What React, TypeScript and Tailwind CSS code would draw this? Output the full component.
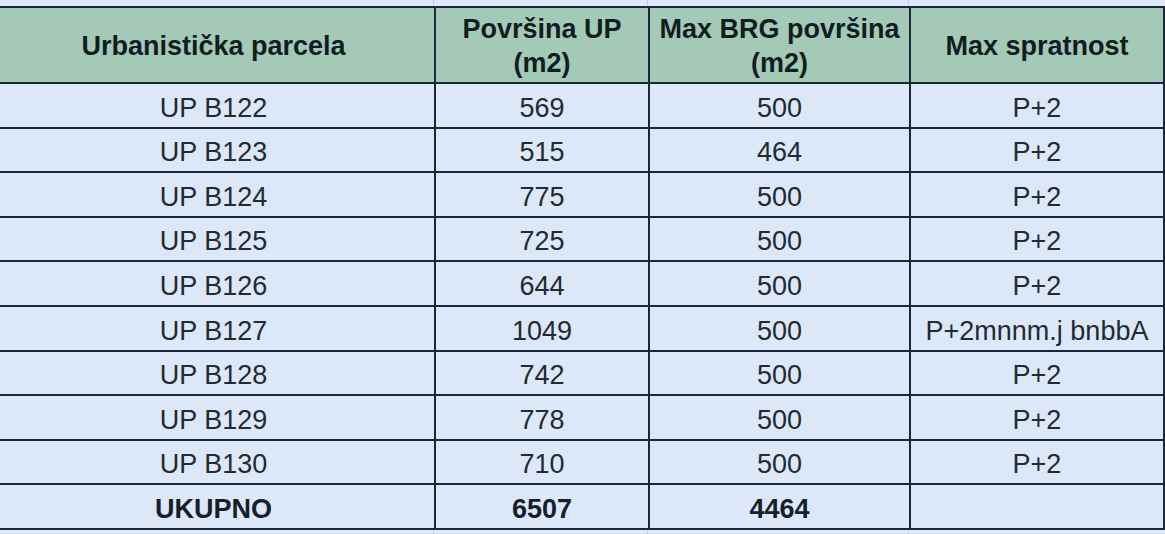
const rows: [string, string, string, string][] = [
  ['UP B122', '569', '500', 'P+2'],
  ['UP B123', '515', '464', 'P+2'],
  ['UP B124', '775', '500', 'P+2'],
  ['UP B125', '725', '500', 'P+2'],
  ['UP B126', '644', '500', 'P+2'],
  ['UP B127', '1049', '500', 'P+2mnnm.j bnbbA'],
  ['UP B128', '742', '500', 'P+2'],
  ['UP B129', '778', '500', 'P+2'],
  ['UP B130', '710', '500', 'P+2'],
];

const cols = 'grid-cols-[441px_212px_259px_252px]';

function Strip({ height }: { height: string }) {
  return (
    <div className={`flex ${height} ml-[-7px]`}>
      <div className="w-[441px] border-r border-[#c3cddb]" />
      <div className="w-[214px] border-r border-[#c3cddb]" />
      <div className="w-[261px] border-r border-[#c3cddb]" />
      <div className="flex-1" />
    </div>
  );
}

const head = 'h-[74px] bg-[#a4c9b6] flex items-center justify-center font-bold text-[27px] leading-[34px] text-[#0f1e22] text-center pt-[2px]';
const cell = 'h-[42.6px] bg-[#dce8f8] flex items-center justify-center text-[27px] pt-[5px] whitespace-nowrap overflow-hidden';

export default function App() {
  return (
    <div
      className="w-[1165px] h-[534px] overflow-hidden bg-[#dde8f7] text-[#222a33]"
      style={{ fontFamily: '"Liberation Sans", Arial, sans-serif' }}
    >
      <Strip height="h-[6px]" />
      <div className={`grid ${cols} gap-[2px] p-[2px] bg-[#18283a] ml-[-9px] w-[1174px]`}>
        <div className={head}>Urbanistička parcela</div>
        <div className={head}>Površina UP<br />(m2)</div>
        <div className={head}>Max BRG površina<br />(m2)</div>
        <div className={head}>Max spratnost</div>
        {rows.map((r) =>
          r.map((c, i) => (
            <div key={r[0] + i} className={cell}>
              {c}
            </div>
          ))
        )}
        <div className={`${cell} font-bold text-[#16202a]`}>UKUPNO</div>
        <div className={`${cell} font-bold text-[#16202a]`}>6507</div>
        <div className={`${cell} font-bold text-[#16202a]`}>4464</div>
        <div className={cell} />
      </div>
      <Strip height="h-[6px]" />
    </div>
  );
}
